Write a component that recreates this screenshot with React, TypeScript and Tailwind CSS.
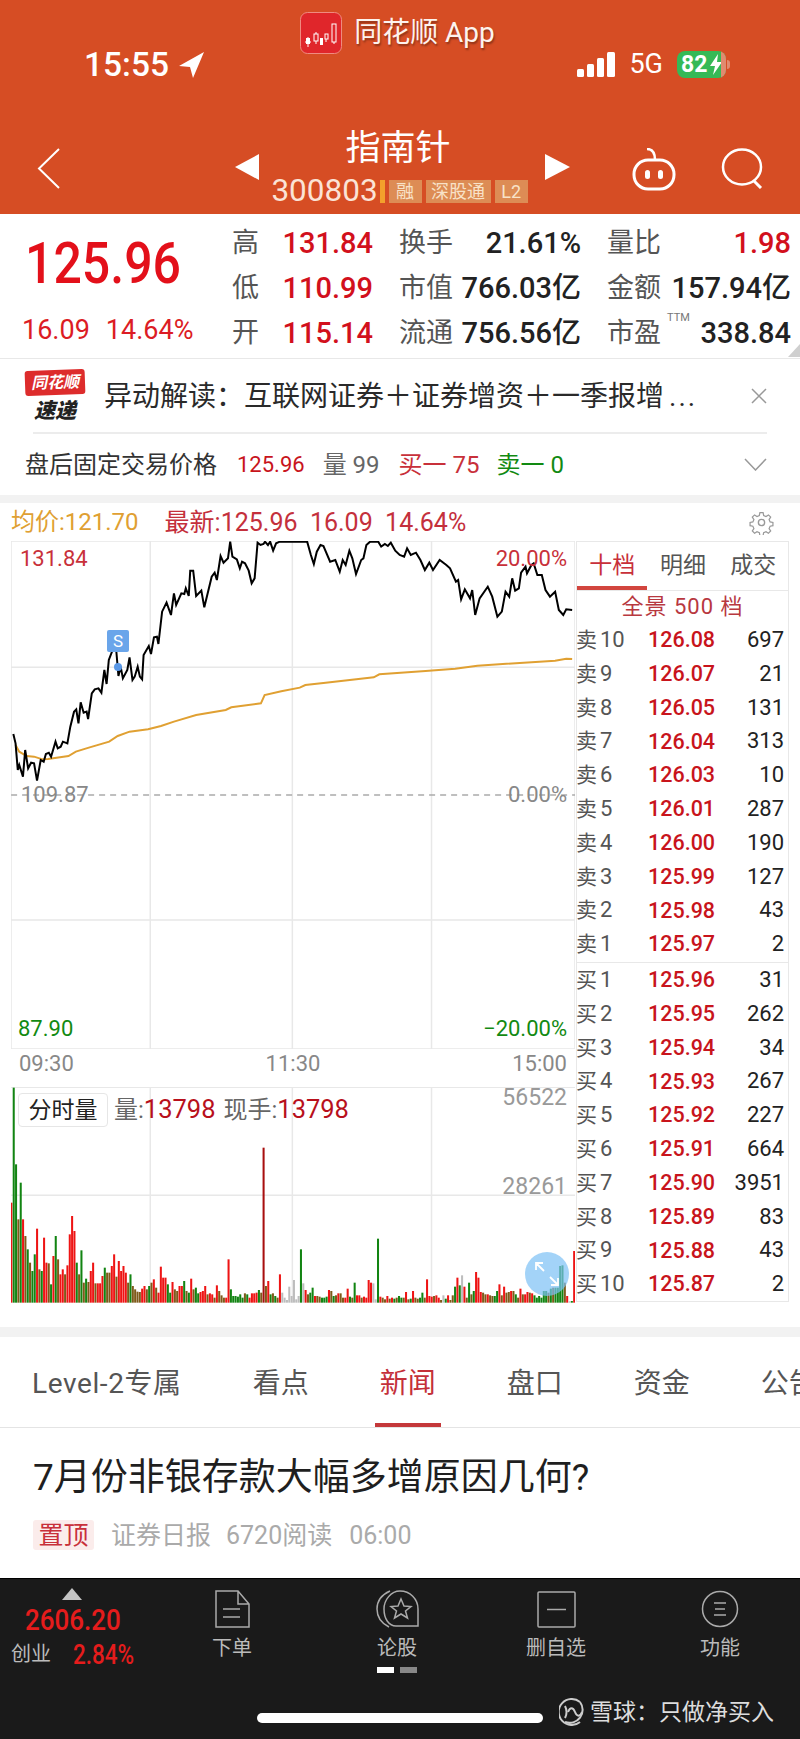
import { FC } from "react"

const pricePts = "36,612 42,640 48,720 52,705 62,740 68,660 76,715 84,698 92,700 100,752 110,690 118,695 124,672 132,668 138,680 150,635 156,655 164,650 170,635 182,640 190,590 200,545 206,538 212,580 218,517 226,548 234,545 238,567 248,490 256,478 266,475 274,488 282,420 288,462 294,390 306,355 314,360 320,438 326,410 332,445 344,420 350,382 358,450 364,440 372,410 378,440 384,448 388,375 402,348 408,372 416,322 424,320 428,342 438,245 450,218 462,255 470,190 476,225 490,190 498,192 502,175 510,198 514,122 522,122 530,198 544,182 552,232 572,140 580,128 586,150 596,78 604,98 616,85 622,35 628,80 640,88 648,115 654,95 662,100 672,122 680,160 688,145 696,38 704,45 712,42 716,35 724,45 730,35 738,62 746,40 756,35 830,35 840,75 848,102 856,65 866,45 874,48 892,95 906,90 918,125 926,90 934,105 944,62 952,85 962,132 976,90 982,85 990,45 1000,35 1022,35 1030,50 1040,42 1048,48 1056,38 1068,62 1080,75 1092,80 1100,55 1110,75 1124,68 1136,90 1148,120 1160,98 1170,120 1188,90 1206,105 1216,115 1232,155 1238,150 1246,208 1256,178 1270,205 1276,180 1284,255 1296,205 1318,170 1330,200 1344,260 1356,245 1366,185 1376,200 1384,145 1392,182 1402,175 1408,128 1420,110 1424,130 1436,105 1442,100 1452,135 1464,135 1474,180 1486,200 1500,185 1510,240 1522,255 1530,238 1546,240"
const avgPts = "42,645 52,665 72,678 92,680 115,688 130,687 185,678 205,665 240,653 295,635 318,618 350,605 400,598 435,588 470,575 530,555 610,540 625,532 705,520 715,495 760,484 810,473 825,465 880,458 1010,442 1025,433 1150,423 1230,416 1290,407 1500,392 1530,386 1546,387"

const volumeData = "r300 g645 g415 y250 g360 r250 y200 g160 y120 g95 g145 r222 y100 g95 r195 r120 y118 g55 r140 g200 y130 r85 r100 y85 r112 r205 r260 r215 g120 y85 g157 y60 g72 y62 r95 r120 y58 r58 r58 r80 g105 y90 y90 r110 r145 y78 r125 r95 r110 r90 y60 g85 y50 y40 y33 y32 r42 r50 y40 g50 y60 r70 y45 r30 r108 r75 r75 g55 g30 r62 y40 y35 r50 r50 g65 y35 g30 r72 y40 g45 g28 r32 r35 r50 y25 r28 r25 y15 r52 y35 y22 y15 r15 r130 g40 g20 g20 g18 g25 g15 y28 g25 r15 r28 r28 r30 g38 y30 d465 y50 r65 g25 y28 g20 y15 r85 s30 s15 s8 s48 s20 s68 s10 s20 g160 s58 r38 y25 g30 g45 r20 y20 y18 g15 g15 g18 r38 y35 g20 y22 r28 y28 y15 r15 r42 g18 y15 g60 r22 r22 y15 r18 r15 r68 r60 s58 s10 g192 r18 y15 y10 r20 y12 r15 g12 y15 g20 g15 y15 r32 y10 g12 r35 y15 y12 g15 g30 y15 r70 r20 r18 y20 r22 r15 y8 s22 g12 r22 y8 y22 g48 r75 g52 s82 r48 y15 g60 y25 g35 r92 r75 r32 y30 y25 r25 y22 y20 g20 g35 r55 y22 r48 y30 y32 r35 y35 g25 y15 r42 y25 r25 r32 y30 r28 g22 g15 g20 g15 g35 g35 y30 g42 y45 g45 g45 g110 g112 y60 r20 s4 g5 r155".split(" ")

const barColors: Record<string, string> = { r: "#ee1414", g: "#128412", y: "#7e5a1a", d: "#a80f0f", s: "#bdbdbd" }

const quoteRows = [
  [["高", "131.84"], ["换手", "21.61%"], ["量比", "1.98"]],
  [["低", "110.99"], ["市值", "766.03亿"], ["金额", "157.94亿"]],
  [["开", "115.14"], ["流通", "756.56亿"], ["市盈", "338.84"]],
]

const asks = [["10", "126.08", "697"], ["9", "126.07", "21"], ["8", "126.05", "131"], ["7", "126.04", "313"], ["6", "126.03", "10"], ["5", "126.01", "287"], ["4", "126.00", "190"], ["3", "125.99", "127"], ["2", "125.98", "43"], ["1", "125.97", "2"]]
const bids = [["1", "125.96", "31"], ["2", "125.95", "262"], ["3", "125.94", "34"], ["4", "125.93", "267"], ["5", "125.92", "227"], ["6", "125.91", "664"], ["7", "125.90", "3951"], ["8", "125.89", "83"], ["9", "125.88", "43"], ["10", "125.87", "2"]]

const BookRow: FC<{ side: string; row: string[] }> = ({ side, row }) => (
  <div className="flex h-[33.8px] items-center text-[22px] leading-none">
    <span className="-ml-[1px] w-[72px] whitespace-nowrap text-[#555]">
      <span className="text-[21px]">{side}</span>
      <span className="ml-[3px]">{row[0]}</span>
    </span>
    <span className="w-[66px] text-[21.5px] font-medium text-[#c8141c]">{row[1]}</span>
    <span className="w-[70px] text-right text-[#222]">{row[2]}</span>
  </div>
)

const Logo = () => (
  <svg width="42" height="42" viewBox="0 0 42 42">
    <rect x="0.5" y="0.5" width="41" height="41" rx="7" fill="#e0262b" stroke="#f08a80" />
    <path d="M5 30h6M8 25v10M16 20v12M26 22v8M34 12v20" stroke="#fff" strokeWidth="1" />
    <rect x="6" y="26" width="4" height="6" fill="#fff" />
    <rect x="14" y="22" width="4" height="7" fill="#e0262b" stroke="#fff" />
    <rect x="20" y="26" width="3" height="7" fill="#fff" />
    <rect x="25" y="22" width="3" height="5" fill="#e0262b" stroke="#fff" />
    <rect x="32" y="12" width="4" height="18" fill="#e0262b" stroke="#fff" />
  </svg>
)

const StatusIcons = () => (
  <div className="flex items-center">
    <svg width="38" height="25" viewBox="0 0 38 25" fill="#fff">
      <rect x="0" y="17" width="7" height="8" rx="1.5" />
      <rect x="10" y="12" width="7" height="13" rx="1.5" />
      <rect x="20" y="6" width="7" height="19" rx="1.5" />
      <rect x="30" y="0" width="8" height="25" rx="1.5" />
    </svg>
    <span className="ml-[14px] text-[27px] leading-none text-white">5G</span>
    <div className="relative ml-[14px] flex h-[27px] w-[49px] items-center overflow-hidden rounded-[8px] bg-[#35b956] pl-[4px] text-[23px] font-bold leading-none text-white">
      82
      <svg className="absolute left-[33px] top-[3px]" width="12" height="21" viewBox="0 0 12 21" fill="#fff">
        <path d="M8 0 0 12h5l-2 9 9-13H7z" />
      </svg>
      <div className="absolute right-0 top-0 h-full w-[5px] bg-[#e08a70]" />
    </div>
    <div className="ml-[1px] h-[9px] w-[3px] rounded-r bg-[#e08a70]" />
  </div>
)

const Header = () => (
  <header className="flex h-[214px] flex-col bg-[#d64d24] text-white">
    <div className="flex h-[51px] items-start justify-center pr-[5px] pt-[12px]">
      <Logo />
      <span className="ml-[12px] mt-[7px] text-[28px] leading-none text-[#fdf3ee] [text-shadow:1px_2px_2px_rgba(0,0,0,0.35)]">同花顺 App</span>
    </div>
    <div className="flex h-[27px] items-center justify-between pl-[84px] pr-[70px]">
      <div className="flex items-center">
        <span className="text-[33.500px] font-medium leading-none">15:55</span>
        <svg className="ml-[10px]" width="25" height="26" viewBox="0 0 25 26" fill="#fff">
          <path d="M25 0 0 14l11 1 3 11z" />
        </svg>
      </div>
      <StatusIcons />
    </div>
    <div className="flex h-[136px] pt-[45px]">
      <div className="w-[235px] pl-[37px] pt-[25px]">
        <svg width="24" height="41" viewBox="0 0 24 41" fill="none" stroke="#fff" strokeWidth="2">
          <path d="M22 1 2 20.5 22 40" />
        </svg>
      </div>
      <div className="flex w-[335px] flex-col items-center">
        <div className="flex h-[48px] w-full items-center justify-between">
          <svg className="mt-[40px]" width="24" height="26" viewBox="0 0 24 26" fill="#fff">
            <path d="M24 0v26L0 13z" />
          </svg>
          <span className="pr-[8px] pt-[2px] text-[35px] leading-none">指南针</span>
          <svg className="mt-[40px]" width="25" height="26" viewBox="0 0 25 26" fill="#fff">
            <path d="M0 0v26l25-13z" />
          </svg>
        </div>
        <div className="mt-[8px] flex h-[24px] items-center pr-[6px]">
          <span className="text-[31.500px] leading-none text-[#fbe3d6]">300803</span>
          <span className="ml-[2px] h-[23px] w-[5px] bg-[#f3a02c]" />
          <span className="ml-[4px] flex h-[23px] w-[33px] items-center justify-center bg-[#dd8c55] text-[18px] text-[#f8e2c8]">融</span>
          <span className="ml-[4px] flex h-[23px] w-[65px] items-center justify-center bg-[#dd8c55] text-[18px] text-[#f8e2c8]">深股通</span>
          <span className="ml-[4px] flex h-[23px] w-[33px] items-center justify-center bg-[#dd8c55] text-[18px] text-[#f8e2c8]">L2</span>
        </div>
      </div>
      <div className="ml-[62px] pt-[25px]">
        <svg width="44" height="43" viewBox="0 0 44 43" fill="none" stroke="#fff" strokeWidth="3">
          <rect x="2" y="12" width="40" height="29" rx="14" />
          <path d="M15 1c5 0 8 3 8 11" strokeWidth="2.5" />
          <rect x="13" y="22" width="5" height="9" rx="2.5" fill="#fff" stroke="none" />
          <rect x="26" y="22" width="5" height="9" rx="2.5" fill="#fff" stroke="none" />
        </svg>
      </div>
      <div className="ml-[45px] pt-[25px]">
        <svg width="44" height="41" viewBox="0 0 44 41" fill="none" stroke="#fff" strokeWidth="2.5">
          <ellipse cx="21" cy="19" rx="19" ry="17.5" />
          <path d="m33 33 7 7" strokeWidth="3" />
        </svg>
      </div>
    </div>
  </header>
)

const Quote = () => (
  <section className="relative flex h-[145px] border-b border-[#e8e8e8] bg-white">
    <div className="w-[232px] pl-[25px]">
      <div className="mt-[21px] inline-block origin-top scale-y-[1.14] text-[50px] font-medium leading-none text-[#e3101a]">125.96</div>
      <div className="mt-[32px] flex text-[27px] leading-none text-[#dc1c24]">
        <span className="-ml-[3px]">16.09</span>
        <span className="ml-[16px]">14.64%</span>
      </div>
    </div>
    <div className="relative grid h-full grid-cols-[141px_182px_184px] gap-x-[26px] pt-[8px]">
      {quoteRows.map((row) =>
        row.map(([label, value], i) => (
          <div key={label} className="flex h-[42px] items-center justify-between whitespace-nowrap">
            <span className="text-[27px] leading-none text-[#555]">{label}</span>
            <span className={`text-[29px] font-medium leading-none ${i === 0 || label === "量比" ? "text-[#d2101c]" : "text-[#222]"}`}>{value}</span>
          </div>
        ))
      )}
      <span className="absolute left-[435px] top-[98px] text-[11px] leading-none text-[#777]">TTM</span>
    </div>
    <svg className="absolute bottom-[1px] right-0" width="12" height="13" viewBox="0 0 12 13" fill="#cfcfcf">
      <path d="M12 0v13H0z" />
    </svg>
  </section>
)

const Notice = () => (
  <section className="h-[136px] bg-white">
    <div className="mx-[25px] flex h-[73px] items-center">
      <div className="flex w-[60px] flex-col items-center">
        <div className="flex h-[25px] w-[60px] -rotate-2 items-center justify-center rounded-[3px] bg-[#dd2c2c] text-[16px] font-bold italic leading-none text-white">同花顺</div>
        <div className="mt-[6px] text-[21px] font-black italic leading-none text-[#222]">速递</div>
      </div>
      <span className="ml-[19px] mt-[3px] w-[590px] whitespace-nowrap text-[28px] leading-none text-[#2a2a2a]">异动解读：互联网证券＋证券增资＋一季报增<span className="ml-[5px] tracking-[2px]">...</span></span>
      <svg className="ml-[57px]" width="16" height="16" viewBox="0 0 16 16" stroke="#999" strokeWidth="1.5">
        <path d="m1 1 14 14M15 1 1 15" />
      </svg>
    </div>
    <div className="mx-[33px] h-[2px] bg-[#ececec]" />
    <div className="flex h-[61px] items-center pl-[25px] pr-[33px] text-[24px] leading-none">
      <span className="text-[#333]">盘后固定交易价格</span>
      <span className="ml-[20px] text-[22px] text-[#c8141c]">125.96</span>
      <span className="ml-[18px] text-[#666]">量 99</span>
      <span className="ml-[19px] text-[#c8303a]">买一 75</span>
      <span className="ml-[17px] text-[#128a12]">卖一 0</span>
      <svg className="ml-auto" width="23" height="13" viewBox="0 0 23 13" fill="none" stroke="#999" strokeWidth="1.5">
        <path d="m1 1 10.500 11L22 1" />
      </svg>
    </div>
  </section>
)

const ChartLegend = () => (
  <div className="flex h-[38px] items-center pl-[11px] pr-[26px] text-[25px] leading-none">
    <span className="text-[24px] text-[#e0a032]">均价:121.70</span>
    <span className="ml-[26px] whitespace-pre text-[#c4303c]">最新:125.96  16.09  14.64%</span>
    <svg className="ml-auto" width="25" height="25" viewBox="0 0 24 24" fill="none" stroke="#999" strokeWidth="1.300">
      <circle cx="12" cy="12" r="3" />
      <path d="M10.300 1.500h3.400l.6 3 2.500 1.100 2.600-1.700 2.400 2.400-1.700 2.600 1.100 2.500 3 .6v3.400l-3 .6-1.100 2.500 1.700 2.600-2.400 2.400-2.600-1.700-2.500 1.100-.6 3h-3.400l-.6-3-2.500-1.100-2.600 1.700-2.400-2.400 1.700-2.600-1.100-2.500-3-.6v-3.400l3-.6 1.100-2.500-1.700-2.600 2.400-2.400 2.600 1.700 2.500-1.100z" transform="translate(1.200 1.200) scale(.9)" />
    </svg>
  </div>
)

const PriceChart = () => (
  <div className="relative h-[508px] w-[564px] text-[22px] leading-none">
    <svg className="block" width="564" height="508" viewBox="29.700 33 1524 1524" preserveAspectRatio="none">
      <g fill="none" stroke="#e8e8e8" strokeWidth="1.500">
        <rect x="29.700" y="33" width="1524" height="1524" vectorEffect="non-scaling-stroke" />
        <path d="M406 33v1524M790 33v1524M1166 33v1524M30 412h1524M30 1170h1524" vectorEffect="non-scaling-stroke" />
      </g>
      <path d="M30 795h1524" stroke="#aaa" strokeWidth="1.500" strokeDasharray="6 5" vectorEffect="non-scaling-stroke" />
      <polyline points={avgPts} fill="none" stroke="#e0a032" strokeWidth="2" vectorEffect="non-scaling-stroke" />
      <polyline points={pricePts} fill="none" stroke="#000" strokeWidth="2" vectorEffect="non-scaling-stroke" />
    </svg>
    <span className="absolute left-[9px] top-[7px] text-[#c8303a]">131.84</span>
    <span className="absolute right-[8px] top-[7px] text-[#c8303a]">20.00%</span>
    <span className="absolute left-[10px] top-[243px] text-[#888]">109.87</span>
    <span className="absolute right-[8px] top-[243px] text-[#888]">0.00%</span>
    <span className="absolute bottom-[9px] left-[7px] text-[#128a12]">87.90</span>
    <span className="absolute bottom-[9px] right-[8px] text-[#128a12]">−20.00%</span>
    <div className="absolute left-[96px] top-[89px] flex h-[22px] w-[22px] items-center justify-center rounded-[2px] bg-[#6aa5ea] text-[17px] text-white">S</div>
    <div className="absolute left-[103px] top-[122px] h-[8px] w-[8px] rounded-full bg-[#5a98e6]" />
  </div>
)

const VolumeChart = () => (
  <div className="relative h-[216px] w-[564px] text-[23px] leading-none">
    <svg className="block" width="564" height="216" viewBox="29.700 141 1524 648" preserveAspectRatio="none">
      <path d="M30 142h1524M30 466h1524M406 142v646M790 142v646M1166 142v646" stroke="#e8e8e8" strokeWidth="1.500" fill="none" vectorEffect="non-scaling-stroke" />
      {volumeData.map((token, i) => {
        const h = Number(token.slice(1))
        return <rect key={i} x={28 + i * 6.31} y={788 - h} width="5.500" height={h} fill={barColors[token[0]]} />
      })}
    </svg>
    <div className="absolute left-[7px] top-[6px] flex items-center whitespace-nowrap text-[24px]">
      <span className="flex h-[34px] w-[90px] items-center justify-center rounded-[4px] border border-[#e6e6e6] bg-white text-[23px] text-[#222]">分时量</span>
      <span className="ml-[6px] text-[#666]">量:<span className="text-[25.500px] text-[#b8101c]">13798</span></span>
      <span className="ml-[8px] text-[#666]">现手:<span className="text-[25.500px] text-[#b8101c]">13798</span></span>
    </div>
    <span className="absolute right-[8px] top-[-1px] text-[#999]">56522</span>
    <span className="absolute right-[8px] top-[88px] text-[#999]">28261</span>
    <div className="absolute left-[514px] top-[165px] flex h-[44px] w-[44px] items-center justify-center rounded-full bg-[#7cc0f5]/70">
      <svg width="28" height="28" viewBox="0 0 28 28" fill="none" stroke="#fff" strokeWidth="1.800">
        <path d="m3 3 8 8M3 10V3h7M25 25l-8-8M25 18v7h-7" />
      </svg>
    </div>
  </div>
)

const OrderBook = () => (
  <div className="ml-[1px] flex h-[761px] w-[213px] flex-col border border-[#e8e8e8]">
    <div className="relative flex h-[50px] items-center border-b border-[#e8e8e8] text-[23px] leading-none text-[#555]">
      <span className="w-[71px] text-center text-[#c8303a]">十档</span>
      <span className="w-[71px] text-center">明细</span>
      <span className="w-[70px] text-center">成交</span>
      <div className="absolute bottom-0 left-0 h-[4px] w-[70px] bg-[#d2453e]" />
    </div>
    <div className="flex h-[33px] items-center justify-center whitespace-pre text-[22px] leading-none tracking-[1px] text-[#b8383f]">全景 500 档</div>
    <div className="border-b border-[#e8e8e8] pb-[1px]">
      {asks.map((row) => <BookRow key={row[0]} side="卖" row={row} />)}
    </div>
    <div>
      {bids.map((row) => <BookRow key={row[0]} side="买" row={row} />)}
    </div>
  </div>
)

const ChartArea = () => (
  <section className="bg-white">
    <ChartLegend />
    <div className="flex h-[786px] pl-[11px]">
      <div className="w-[564px]">
        <PriceChart />
        <div className="flex h-[38px] items-center justify-between px-[8px] pb-[8px] text-[22px] leading-none text-[#888]">
          <span>09:30</span>
          <span>11:30</span>
          <span>15:00</span>
        </div>
        <VolumeChart />
      </div>
      <OrderBook />
    </div>
  </section>
)

const NewsTabs = () => (
  <div className="flex h-[91px] gap-x-[71px] overflow-hidden border-b border-[#e4e4e4] bg-white pl-[32px] text-[28px] leading-none text-[#555]">
    {["Level-2专属", "看点", "新闻", "盘口", "资金", "公告"].map((tab) => (
      <div key={tab} className={`relative flex h-full shrink-0 items-center whitespace-nowrap pt-[3px] ${tab === "新闻" ? "text-[#c4303a]" : ""} ${tab === "Level-2专属" ? "tracking-[0.6px]" : ""}`}>
        {tab}
        {tab === "新闻" && <div className="absolute bottom-0 -left-[5px] h-[4px] w-[66px] bg-[#c4383a]" />}
      </div>
    ))}
  </div>
)

const NewsItem = () => (
  <div className="h-[150px] bg-white pl-[33px]">
    <div className="pt-[31px] text-[37px] leading-none text-[#1f1f1f]">7月份非银存款大幅多增原因几何?</div>
    <div className="mt-[24px] flex items-center text-[25px] leading-none text-[#aaa]">
      <span className="flex h-[30px] w-[61px] items-center justify-center rounded-[3px] bg-[#fbeceb] text-[#c8303a]">置顶</span>
      <span className="ml-[17px]">证券日报</span>
      <span className="ml-[15px]">6720阅读</span>
      <span className="ml-[17px]">06:00</span>
    </div>
  </div>
)

const NavLabel: FC<{ label: string }> = ({ label }) => (
  <span className="mt-[10px] text-[20px] leading-none text-[#bbb]">{label}</span>
)

const BottomBar = () => (
  <footer className="relative h-[161px] border-t border-black bg-[#1a1a1a]">
    <div className="grid h-full grid-cols-[150px_164px_166px_152px_168px] pt-[9px]">
      <div className="flex flex-col items-start pl-[11px]">
        <svg className="ml-[51px]" width="20" height="12" viewBox="0 0 20 12" fill="#c4c4c4">
          <path d="M10 0 20 12H0z" />
        </svg>
        <span className="ml-[14px] mt-[7px] inline-block scale-y-[1.14] text-[26px] font-medium leading-none text-[#e51c1c]">2606.20</span>
        <div className="mt-[10px] flex items-center">
          <span className="text-[20px] leading-none text-[#bbb]">创业</span>
          <span className="ml-[22px] inline-block scale-y-[1.2] text-[22.500px] font-medium leading-none text-[#e51c1c]">2.84%</span>
        </div>
      </div>
      <div className="flex flex-col items-center pt-[2px]">
        <svg width="35" height="38" viewBox="0 0 35 38" fill="none" stroke="#aaa" strokeWidth="1.500">
          <path d="M1 1h22l11 13v23H1zM23 1v13h11M8 19h17M8 27h17" />
        </svg>
        <NavLabel label="下单" />
      </div>
      <div className="flex flex-col items-center pt-[2px]">
        <svg width="43" height="38" viewBox="0 0 43 38" fill="none" stroke="#aaa" strokeWidth="1.500">
          <path d="M14 1C5 5 1 12 1 19s4 14 12 18M8 19c0-9 7-18 16-18 10 0 18 8 18 18v17H20C13 36 8 29 8 19z" />
          <path d="m25 9 3 7 7 .5-5.500 4.500 2 7-6.500-4-6.500 4 2-7L15 16.500l7-.5z" />
        </svg>
        <NavLabel label="论股" />
        <div className="mt-[9px] flex gap-x-[6px]">
          <span className="h-[6px] w-[17px] bg-white" />
          <span className="h-[6px] w-[17px] bg-[#888]" />
        </div>
      </div>
      <div className="flex flex-col items-center pt-[3px]">
        <svg width="39" height="37" viewBox="0 0 39 37" fill="none" stroke="#aaa" strokeWidth="1.500">
          <rect x="1" y="1" width="37" height="35" rx="1" />
          <path d="M10 18.500h19" />
        </svg>
        <NavLabel label="删自选" />
      </div>
      <div className="flex flex-col items-center pl-[8px] pt-[2px]">
        <svg width="38" height="38" viewBox="0 0 38 38" fill="none" stroke="#aaa" strokeWidth="1.500">
          <circle cx="19" cy="19" r="17.500" />
          <path d="M13 13h12M14 19h10M13 25h12" />
        </svg>
        <NavLabel label="功能" />
      </div>
    </div>
    <div className="absolute left-[257px] top-[134px] h-[10px] w-[286px] rounded-full bg-white" />
    <div className="absolute left-[559px] top-[119px] flex items-center">
      <svg width="27" height="28" viewBox="0 0 27 28" fill="none" stroke="#ccc" strokeWidth="2">
        <path d="M21 4A13 13 0 1 0 21 24" />
        <path d="M6 8a13 13 0 0 1 0 12M6 24a13 13 0 0 0 15-20" />
        <path d="M9 14c2-5 5-5 7 0s5 5 7 0" />
      </svg>
      <span className="ml-[4px] whitespace-nowrap text-[23px] leading-none text-[#ddd]">雪球：只做净买入</span>
    </div>
  </footer>
)

const App = () => {
  return (
    <div className="relative h-[1739px] w-[800px] overflow-hidden bg-white font-['Roboto','Noto_Sans_CJK_SC',sans-serif]">
      <Header />
      <Quote />
      <Notice />
      <div className="h-[8px] bg-[#f2f2f2]" />
      <ChartArea />
      <div className="h-[10px] bg-[#f2f2f2]" />
      <NewsTabs />
      <NewsItem />
      <BottomBar />
    </div>
  )
}

export default App
